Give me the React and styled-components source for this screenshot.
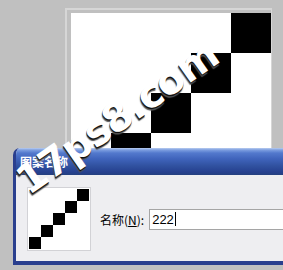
import React from 'react';
import styled, { createGlobalStyle } from 'styled-components'

const Global = createGlobalStyle`
html, body {
  margin: 0;
  padding: 0;
  background: #c0c0c0;
  overflow: hidden;
}
`
const Screen = styled.div`
position: relative;
width: 283px;
height: 270px;
overflow: hidden;
background: #c0c0c0;
`
const Workspace = styled.div`
height: 148px;
overflow: hidden;
padding: 8px 0 0 65px;
box-sizing: border-box;
`
const Frame = styled.div`
display: inline-block;
border: 2px solid #d6d6d6;
border-right-width: 1px;
padding: 3px 0 0 4px;
`
const Grid = styled.div`
display: grid;
grid-template-columns: repeat(5, ${p => p.cell}px);
grid-auto-rows: ${p => p.cell}px;
background: #fff;
`
const Cell = styled.div`
background: ${p => (p.on ? '#000' : '#fff')};
`
const Dialog = styled.div`
margin-left: 13px;
width: 300px;
border-left: 3px solid #2a3f8e;
border-bottom: 4px solid #2a3f8e;
border-top-left-radius: 7px;
overflow: hidden;
background: #eeeef1;
`
const TitleBar = styled.div`
height: 27px;
display: flex;
align-items: center;
padding-left: 4px;
background: linear-gradient(#b9ccef 0, #7c9ee0 2px, #5379cd 5px, #3f63bb 11px, #30519f 18px, #26408f 24px, #24407f 27px);
color: #fff;
font: bold 12px "Noto Sans CJK SC", sans-serif;
`
const Body = styled.div`
display: flex;
align-items: center;
padding: 12px 0 10px 11px;
`
const Preview = styled.div`
border: 1px solid #d2d2d6;
padding: 1px;
background: #fff;
`
const Label = styled.label`
margin-left: 9px;
font: 12px "Noto Sans CJK SC", sans-serif;
color: #000;
white-space: nowrap;
u { text-decoration: underline; }
`
const Field = styled.div`
margin-left: 5px;
flex: 1;
height: 21px;
box-sizing: border-box;
border: 1px solid #a5a5a5;
background: #fff;
display: flex;
align-items: center;
padding-left: 2px;
font: 13px "Liberation Sans", Arial, sans-serif;
color: #000;
`
const Caret = styled.span`
display: inline-block;
width: 1px;
height: 14px;
margin-left: 1px;
background: #000;
`
const Watermark = styled.span`
position: absolute;
left: 117px;
top: 117px;
transform: translate(-50%, -50%) rotate(-35deg);
font: bold 40px "DejaVu Sans", sans-serif;
letter-spacing: -1px;
color: #fff;
white-space: nowrap;
text-shadow: -1px 1px 0 #111, -2px 2px 1px #555;
pointer-events: none;
`

const Pattern = ({ cell }) => (
  <Grid cell={cell}>
    {Array.from({ length: 25 }, (_, i) => (
      <Cell key={i} on={(i % 5) + Math.floor(i / 5) === 4 ? 1 : 0} />
    ))}
  </Grid>
)

class App extends React.Component {
  render() {
    return (
      <Screen>
        <Global />
        <Workspace>
          <Frame>
            <Pattern cell={40} />
          </Frame>
        </Workspace>
        <Dialog>
          <TitleBar>图案名称</TitleBar>
          <Body>
            <Preview>
              <Pattern cell={12} />
            </Preview>
            <Label>名称(<u>N</u>):</Label>
            <Field>222<Caret /></Field>
          </Body>
        </Dialog>
        <Watermark>17ps8.com</Watermark>
      </Screen>
    );
  }
}

export default App;
